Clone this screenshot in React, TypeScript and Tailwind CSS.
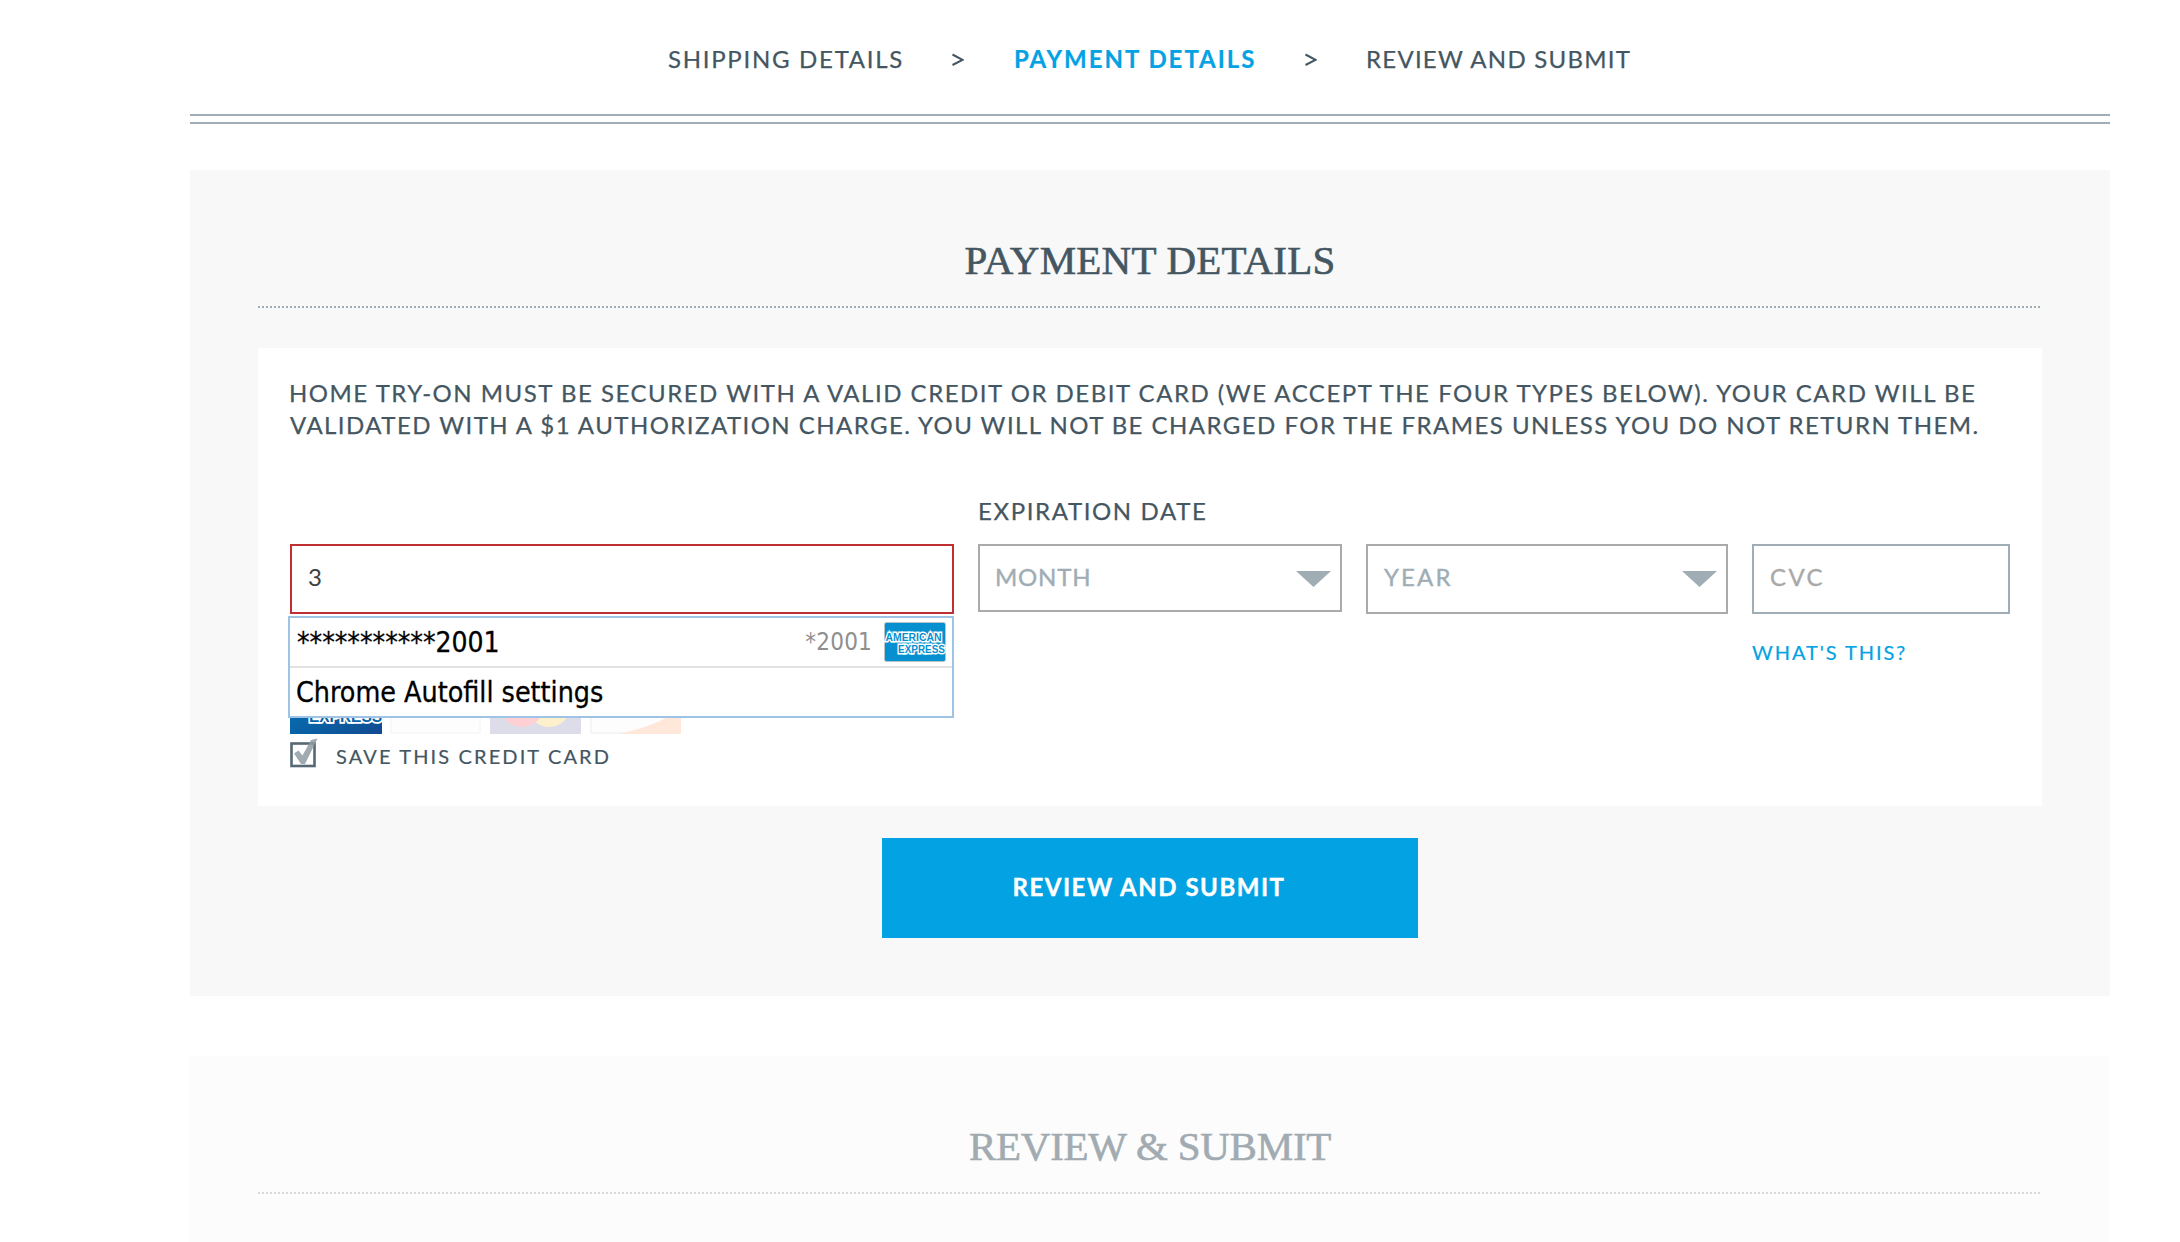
import type { ReactNode } from "react";

function DottedRule({ faded = false }: { faded?: boolean }) {
  return (
    <div
      className={
        faded
          ? "mt-[22px] h-0.5 bg-[repeating-linear-gradient(90deg,#d4d9dc_0_2px,transparent_2px_4px)]"
          : "mt-[22px] h-0.5 bg-[repeating-linear-gradient(90deg,#a0adb4_0_2px,transparent_2px_4px)]"
      }
    />
  );
}

function Heading({ children, className }: { children: ReactNode; className: string }) {
  return (
    <h2
      className={`text-center font-['Liberation_Serif',serif] text-[41px] leading-[48px] whitespace-nowrap [-webkit-text-stroke:0.6px_currentColor] ${className}`}
    >
      {children}
    </h2>
  );
}

function Steps() {
  return (
    <nav className="grid h-[114px] grid-cols-[283px_63px_290px_62px_1fr] pt-[43px] pl-[668px] text-[24px] leading-8 whitespace-nowrap text-[#445661] [-webkit-text-stroke:0.25px_currentColor]">
      <span className="tracking-[1.72px]">SHIPPING DETAILS</span>
      <Chevron />
      <span className="font-bold tracking-[1.98px] text-[#02a2e3] [-webkit-text-stroke:0.2px_currentColor]">PAYMENT DETAILS</span>
      <Chevron />
      <span className="tracking-[1.25px]">REVIEW AND SUBMIT</span>
    </nav>
  );
}

function Chevron() {
  return (
    <svg className="mt-2.5 ml-px h-3.5 w-3" viewBox="0 0 12 14" fill="none" stroke="#445661" strokeWidth="2">
      <path d="M0.5 1.5 10.5 6.8 0.5 12" />
    </svg>
  );
}

function Caret() {
  return (
    <svg className="mt-1 h-4 w-[35px]" viewBox="0 0 35 16">
      <path d="M0 0H35L17.5 16Z" fill="#a0adb4" />
    </svg>
  );
}

function Column({ label, className, children }: { label?: string; className: string; children: ReactNode }) {
  return (
    <div className={className}>
      <div className="mb-[21px] h-6 text-[24px] leading-6 tracking-[1.62px] whitespace-nowrap [-webkit-text-stroke:0.25px_currentColor]">
        {label}
      </div>
      {children}
    </div>
  );
}

function AmexBadge() {
  return (
    <svg className="h-10 w-[62px]" viewBox="0 0 62 40">
      <rect x="0.5" y="0.5" width="61" height="39" rx="2" fill="#0690cf" stroke="#b9c4ca" />
      <g
        fontFamily="Liberation Sans, sans-serif"
        fontSize="11"
        fontWeight="bold"
        fill="#0690cf"
        stroke="#fff"
        strokeWidth="2.8"
        paintOrder="stroke"
      >
        <text x="1.5" y="18.5" textLength="56" lengthAdjust="spacingAndGlyphs">AMERICAN</text>
        <text x="14" y="30.5" textLength="47" lengthAdjust="spacingAndGlyphs">EXPRESS</text>
      </g>
    </svg>
  );
}

function AutofillMenu() {
  return (
    <div className="absolute top-[72px] -left-0.5 h-[102px] w-[666px] border-2 border-[#9fc3e5] bg-white font-['DejaVu_Sans_Condensed','DejaVu_Sans',sans-serif] text-[28px] text-black">
      <div className="flex h-[50px] items-center border-b-2 border-[#e1e1e1] pr-1.5 pl-[7px]">
        <span className="pt-px [-webkit-text-stroke:0.3px_currentColor]">***********2001</span>
        <span className="mr-3 ml-auto text-[24px] tracking-[0.2px] text-[#8f8f8f]">*2001</span>
        <AmexBadge />
      </div>
      <div className="flex h-12 items-center pt-0.5 pl-[6px] text-[28.35px] [-webkit-text-stroke:0.3px_currentColor]">
        Chrome Autofill settings
      </div>
    </div>
  );
}

function AcceptedCards() {
  return (
    <div className="mt-[62px] flex h-[58px] gap-2">
      <svg className="h-[58px] w-[92px]" viewBox="0 0 92 58">
        <defs>
          <linearGradient id="amex" x1="0" x2="1" y1="0" y2="1">
            <stop offset="0.4" stopColor="#0868ab" />
            <stop offset="1" stopColor="#114a90" />
          </linearGradient>
        </defs>
        <rect width="92" height="58" fill="url(#amex)" />
        <text
          x="19" y="46" textLength="73" lengthAdjust="spacingAndGlyphs"
          fontFamily="Liberation Sans, sans-serif" fontSize="16" fontWeight="bold"
          fill="#0863a6" stroke="#fff" strokeWidth="3.4" paintOrder="stroke"
        >
          EXPRESS
        </text>
      </svg>
      <div className="w-[91px] border-2 border-[#f8f8f8] bg-[#fdfdfd]" />
      <svg className="ml-px h-[58px] w-[91px]" viewBox="0 0 91 58">
        <rect width="91" height="58" fill="#dcdde9" />
        <circle cx="59" cy="29" r="22" fill="#fff0cc" />
        <circle cx="32" cy="29" r="22" fill="#ffd0d3" />
      </svg>
      <svg className="ml-px h-[58px] w-[91px]" viewBox="0 0 91 58">
        <rect width="91" height="58" fill="#fdfdfd" />
        <path d="M1 0V57H40" fill="none" stroke="#f5f5f5" strokeWidth="2" />
        <path d="M28 58Q58 52 80 40L91 32V58Z" fill="#ffe7da" />
      </svg>
    </div>
  );
}

function SaveCard() {
  return (
    <label className="mt-2 flex h-7 text-[20px] leading-7 tracking-[2.12px] whitespace-nowrap [-webkit-text-stroke:0.2px_currentColor]">
      <svg className="-mt-[5px] mr-[18px] h-[31px] w-7" viewBox="0 0 28 31" fill="none">
        <rect x="1.5" y="6.5" width="23" height="22.5" fill="#fff" stroke="#566873" strokeWidth="2.6" />
        <path d="M4 16.5 8.5 13.5 12.5 18.5 21 3 27.5 1.5 15 27H11Z" fill="#8f9ba3" fillOpacity="0.85" />
      </svg>
      <span>SAVE THIS CREDIT CARD</span>
    </label>
  );
}

export default function App() {
  return (
    <div className="h-[1242px] w-[2180px] overflow-hidden bg-white font-['Lato',sans-serif] text-[#445661]">
      <Steps />
      <div className="mr-[70px] ml-[190px] h-2.5 border-y-2 border-[#a0adb4]" />

      <section className="mt-[46px] mr-[70px] ml-[190px] h-[826px] bg-[#f8f8f8] px-[68px] pt-[66px]">
        <Heading className="tracking-[0.22px]">PAYMENT DETAILS</Heading>
        <DottedRule />

        <div className="mt-10 h-[458px] bg-white px-8 pt-[29px]">
          <p className="text-[24px] leading-8 whitespace-nowrap [-webkit-text-stroke:0.25px_currentColor]">
            <span className="-ml-px block tracking-[1.51px]">
              HOME TRY-ON MUST BE SECURED WITH A VALID CREDIT OR DEBIT CARD (WE ACCEPT THE FOUR TYPES BELOW). YOUR CARD WILL BE
            </span>
            <span className="block tracking-[1.45px]">
              VALIDATED WITH A $1 AUTHORIZATION CHARGE. YOU WILL NOT BE CHARGED FOR THE FRAMES UNLESS YOU DO NOT RETURN THEM.
            </span>
          </p>

          <div className="mt-[58px] flex gap-6">
            <Column className="w-[664px]">
              <div className="relative flex h-[70px] items-center border-2 border-[#c03033] bg-white pb-1 pl-4 text-[24px] text-[#404040]">
                3
                <div className="absolute -top-0.5 -left-0.5">
                  <AutofillMenu />
                </div>
              </div>
              <AcceptedCards />
              <SaveCard />
            </Column>

            <Column label="EXPIRATION DATE" className="w-[364px]">
              <div className="flex h-[68px] items-center justify-between border-2 border-[#aaaaaa] pr-[9px] pb-[3px] pl-[15px] text-[24px] tracking-[0.8px] text-[#a0adb4] [-webkit-text-stroke:0.4px_currentColor]">
                MONTH
                <Caret />
              </div>
            </Column>

            <Column className="w-[362px]">
              <div className="flex h-[70px] items-center justify-between border-2 border-[#aaaaaa] pr-[9px] pb-1 pl-4 text-[24px] tracking-[2.1px] text-[#a0adb4] [-webkit-text-stroke:0.4px_currentColor]">
                YEAR
                <Caret />
              </div>
            </Column>

            <Column className="w-[258px]">
              <div className="flex h-[70px] items-center border-2 border-[#a0adb4] pb-1 pl-4 text-[24px] tracking-[2.4px] text-[#a9a9a9] [-webkit-text-stroke:0.4px_currentColor]">
                CVC
              </div>
              <a className="mt-[26px] block text-[20px] leading-6 tracking-[1.95px] text-[#02a2e3] [-webkit-text-stroke:0.2px_currentColor]">
                WHAT'S THIS?
              </a>
            </Column>
          </div>
        </div>

        <button className="mx-auto mt-8 flex h-[100px] w-[536px] items-center justify-center bg-[#02a2e3] pr-0.5 pb-0.5 text-[24px] font-bold tracking-[1.52px] text-white [-webkit-text-stroke:0.4px_currentColor]">
          REVIEW AND SUBMIT
        </button>
      </section>

      <section className="mt-[60px] mr-[70px] ml-[190px] h-[186px] bg-[#fcfcfc] px-[68px] pt-[66px]">
        <Heading className="tracking-[-0.25px] text-[#a1abb1]">REVIEW &amp; SUBMIT</Heading>
        <DottedRule faded />
      </section>
    </div>
  );
}
